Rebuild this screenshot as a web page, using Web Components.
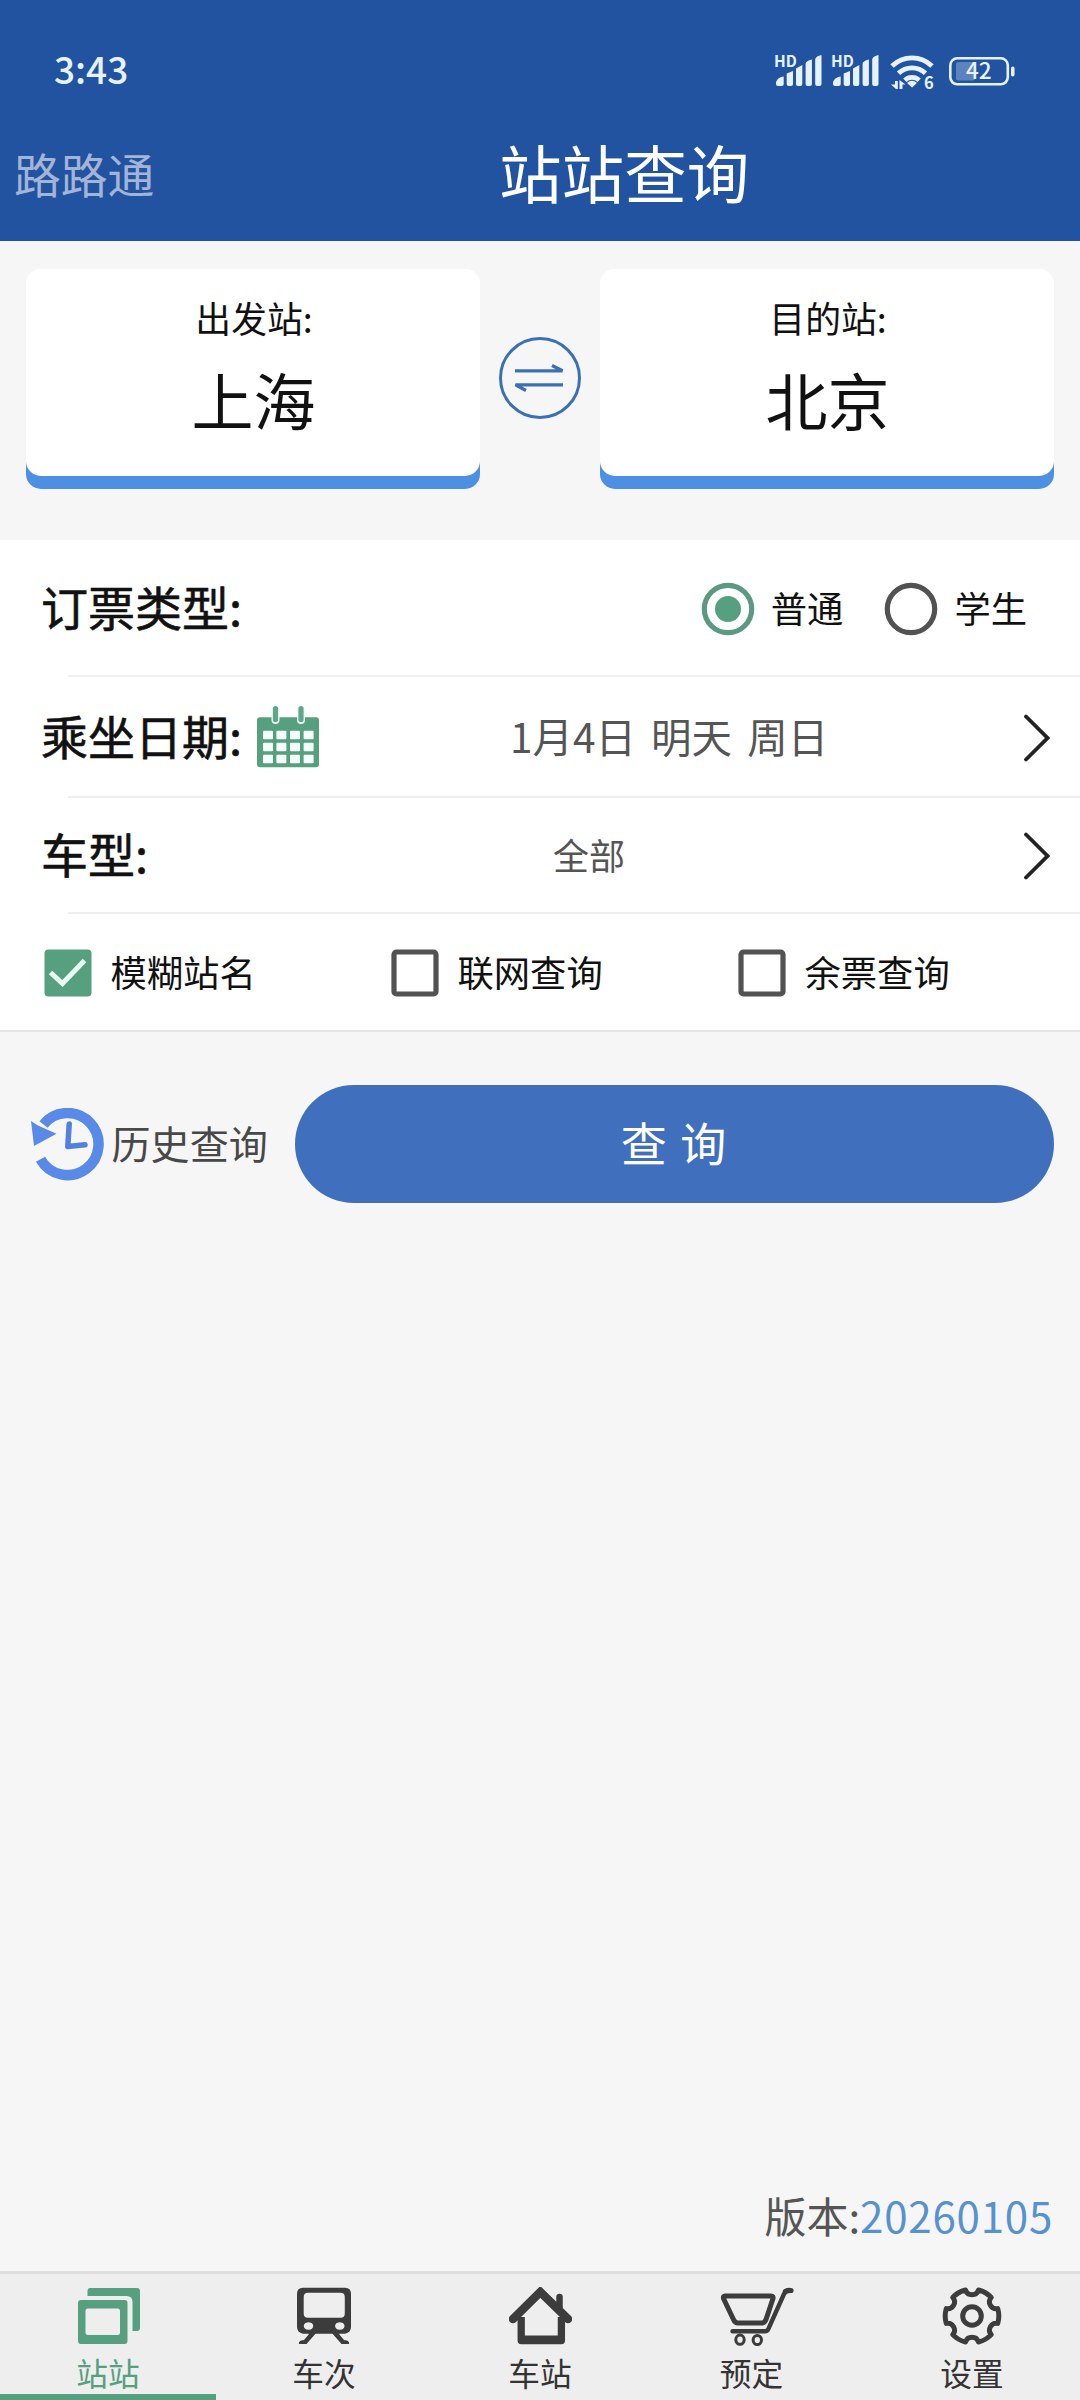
<!DOCTYPE html>
<html lang="zh-CN">
<head>
<meta charset="utf-8">
<title>站站查询</title>
<style>
html,body{margin:0;padding:0}
body{width:1080px;height:2400px;background:#f6f6f6;font-family:"Noto Sans CJK SC",sans-serif;color:#111}
</style>
</head>
<body>
<ticket-app></ticket-app>
<script>
const define = (name, html) => customElements.define(name, class extends HTMLElement {
  constructor() {
    super();
    this.attachShadow({ mode: 'open' });
  }
  connectedCallback() {
    const t = document.createElement('template');
    t.innerHTML = typeof html === 'function' ? html(this) : html;
    this.shadowRoot.replaceChildren(t.content.cloneNode(true));
  }
});

/* Six-lobed gear outline with round notches */
const gear = (() => {
  const p = (r, a) => (r * Math.cos(a * Math.PI / 180) + 31).toFixed(2) + ' ' + (r * Math.sin(a * Math.PI / 180) + 29).toFixed(2);
  let d = 'M' + p(26.8, -16);
  for (let k = 0; k < 6; k++) {
    d += 'A26.8 26.8 0 0 1 ' + p(26.8, k * 60 + 16) + 'A6.8 6.8 0 0 0 ' + p(26.8, k * 60 + 44);
  }
  return d + 'Z';
})();

const icons = {
  cards: `<svg width="62" height="58" fill="#56a07f" style="margin-left:1.500px"><path d="M9.500 9V4q0-3 3-3h46.500q3 0 3 3v37q0 3-3 3h-4.500V15q0-6-6-6z"/><path fill-rule="evenodd" d="M3 13h43.500q3 0 3 3v38q0 3-3 3H3q-3 0-3-3V16q0-3 3-3zM10 21.500q-2.500 0-2.500 2.500v21.500q0 2.500 2.500 2.500h29.500q2.500 0 2.500-2.500V24q0-2.500-2.500-2.500z"/></svg>`,
  train: `<svg width="54" height="58" fill="#3c3c3c"><path fill-rule="evenodd" d="M6 .7h42q6 0 6 6V40q0 5.500-6 6.700H6Q0 45.500 0 40V6.700q0-6 6-6zM11 5.700q-4.300 0-4.300 4.300v16.500q0 4.300 4.300 4.300h32.500q4.300 0 4.300-4.300V10q0-4.300-4.300-4.300zM11.500 35.200a4.700 3.800 0 1 0 .01 0zM42.800 35.200a4.700 3.800 0 1 0 .01 0z"/><path d="M10.500 45h9.500L9.500 57H2q-.8-2 2-3.500l3-.5 5-6zM43.500 45H34l10.500 12H52q.8-2-2-3.500l-3-.5-5-6z"/></svg>`,
  house: `<svg width="63" height="59" fill="none" stroke="#3c3c3c"><path d="M4 32 31.300 5 59 32" stroke-width="8.500" stroke-linecap="round"/><path d="M50.500 22V10" stroke-width="6.500" stroke-linecap="round"/><path d="M12.200 30v23.500h40.200V30" stroke-width="7.300" stroke-linejoin="round"/><path d="M12 52.500h41" stroke-width="8"/></svg>`,
  cart: `<svg width="76" height="59" fill="none" stroke="#3c3c3c" stroke-linejoin="round" stroke-linecap="round" style="margin-left:2px"><path d="M6 9h46q2.500 0 2 2.500l-7 21q-1.500 3.500-4 3.500H19q-3 0-4.500-3.500l-10-21Q4 9 6 9z" stroke-width="5"/><path d="M13.500 44.200H46q2.500 0 3.500-2.500L65 7q1.800-4 5.500-4" stroke-width="4.400"/><path d="M66.500 4.500q1.500-1 5.500-1" stroke-width="5.200"/><ellipse cx="21" cy="52.700" rx="4.200" ry="4.600" stroke-width="3"/><ellipse cx="38.300" cy="53" rx="4.200" ry="4.600" stroke-width="3"/></svg>`,
  gear: `<svg width="62" height="58" fill="none" stroke="#3c3c3c" stroke-linejoin="round"><path d="${gear}" stroke-width="5"/><circle cx="31" cy="29" r="9.300" stroke-width="5"/></svg>`
};

const bars = x => `<g transform="translate(${x} 0)"><text x="-2" y="15.500" font-size="15.500" font-weight="700">HD</text><path d="M0 33v-2q2-5 7.700-5.500V33q0 2-2 2H2q-2 0-2-2z"/><path d="M10.700 22.500l6.300-2.500v13q0 2-2 2h-2.300q-2 0-2-2z"/><path d="M20 17.500l6.300-3.500v19q0 2-2 2H22q-2 0-2-2z"/><path d="M29.600 13q0-3 6.300-4.500V33q0 2-2 2h-2.300q-2 0-2-2z"/><path d="M39.200 8q1-3 6.300-4V33q0 2-2 2h-2.300q-2 0-2-2z"/></g>`;

define('status-bar', `<style>
:host{display:flex;height:140px;justify-content:space-between;box-sizing:border-box;padding:39px 64px 0 54px;color:#e6f3ff}
time{font-size:37px;line-height:48px;font-weight:500;height:48px;margin-top:5px}
svg{font-family:"Noto Sans CJK SC",sans-serif;display:block}
</style><time>3:43</time>
<svg width="243" height="60" viewBox="0 -12 243 60" fill="#e6f3ff">
${bars(3)}${bars(60)}
<g fill="none" stroke="#e6f3ff" stroke-width="4.800"><path d="M119 15a28.500 28.500 0 0 1 40 0"/><path d="M125.500 22.300a19.500 19.500 0 0 1 27 0"/><path d="M131.800 29.200a10.800 10.800 0 0 1 14.400 0"/></g>
<path d="M134 32q5-4.500 10 0L139 36.500z"/>
<path d="M124.800 30v8h-1.800l-5-4.500h4V30zM126.500 38v-9l6 4.500h-3V38z"/>
<text x="151" y="38" font-size="16.500" font-weight="700">6</text>
<rect x="177.300" y="7.300" width="57.500" height="26" rx="7" fill="none" stroke="#e6f3ff" stroke-width="2.600"/>
<rect x="183" y="11" width="19" height="18.500" rx="2" opacity=".3"/>
<rect x="238" y="15.500" width="3.500" height="10" rx="1.700"/>
<text x="193" y="28.300" font-size="22.500" font-weight="500">42</text>
</svg>`);

define('title-bar', `<style>
:host{display:flex;align-items:center;height:101px;box-sizing:border-box;padding-left:14px;color:#fff}
.app{font-size:46.800px;line-height:60px;color:#a3b5d6;width:485px;position:relative;top:-18px}
h1{margin:0;font-size:62.600px;line-height:80px;font-weight:400;position:relative;top:-20px}
</style><div class="app"><slot name="app"></slot></div><h1><slot></slot></h1>`);

define('station-card', el => `<style>
:host{display:block;width:454px;height:220px;border-radius:15px;background:linear-gradient(#fff 0 60%,#4d90e3 60%)}
.face{height:207px;border-radius:15px;background:#fff;text-align:center}
.label{font-size:35.800px;line-height:50px;padding:23px 0 0 2px}
.name{font-size:62px;line-height:80px;padding:17px 0 0 1px}
</style><div class="face"><div class="label">${el.getAttribute('label')}</div><div class="name"><slot></slot></div></div>`);

define('swap-button', `<style>:host{display:block;width:84px;height:84px}svg{display:block}</style>
<svg width="84" height="84" fill="none" stroke="#3b70b2"><circle cx="42" cy="42" r="39.500" stroke-width="3"/><path d="M17 34.800h47.500L54 29.500M65 48.800H17.500L28 54.500" stroke-width="3.200"/></svg>`);

define('station-picker', `<style>
:host{display:flex;justify-content:space-between;height:299px;box-sizing:border-box;padding:28px 26px 0}
swap-button{margin-top:67px}
</style><station-card label="出发站:">上海</station-card><swap-button></swap-button><station-card label="目的站:">北京</station-card>`);

define('form-row', `<style>
:host{display:block;background:#fff;height:var(--h)}
.row{display:flex;align-items:center;height:calc(var(--h) - 2px);box-sizing:border-box;padding-top:2px}
.label{font-size:47px;line-height:60px;padding-left:41px;-webkit-text-stroke:.6px #111;margin-top:-6px}
.line{height:2px;margin-left:68px;background:#eee}
:host([last]) .line{margin-left:0;background:#e6e6e6}
::slotted(.value){color:#555}
</style><div class="row"><div class="label"><slot name="label"></slot></div><slot></slot></div><div class="line"></div>`);

define('radio-option', el => `<style>
:host{display:flex;align-items:center;gap:16px;font-size:36.300px;line-height:50px}
svg{display:block}
span{position:relative;top:-2px}
</style><svg width="54" height="54"><circle cx="27" cy="27" r="23.700" fill="none" stroke="${el.hasAttribute('checked') ? '#5b9a80' : '#525252'}" stroke-width="5.200"/>${el.hasAttribute('checked') ? '<circle cx="27" cy="27" r="13" fill="#56a07f"/>' : ''}</svg><span><slot></slot></span>`);

define('check-option', el => `<style>
:host{display:flex;align-items:center;gap:18.500px;font-size:36.300px;line-height:50px;width:347px}
svg{display:block}
span{position:relative;top:-2px}
</style><svg width="48" height="48">${el.hasAttribute('checked')
  ? '<rect x=".5" y=".5" width="47" height="47" rx="4" fill="#56a07f"/><path d="M6.500 23.500 18.500 34.500 40.500 11.500" fill="none" stroke="#e8fbf2" stroke-width="5"/>'
  : '<rect x="3" y="3" width="42" height="42" rx="2.500" fill="none" stroke="#525252" stroke-width="5.200"/>'}</svg><span><slot></slot></span>`);

define('calendar-icon', () => {
  let cells = '';
  for (const y of [24.7, 36.7, 48.7]) for (const x of [6, 19.4, 33, 46.6]) cells += `<rect x="${x}" y="${y}" width="10" height="8.500" rx="1" fill="#f4fffa"/>`;
  const peg = x => `<rect x="${x - 4}" y="1" width="8" height="17" rx="4" fill="#e6fff5"/><rect x="${x - 2.600}" y="0" width="5.200" height="16" rx="2.600" fill="#62a489"/>`;
  return `<style>:host{display:block;margin:-2px 0 0 15px}svg{display:block}</style><svg width="62" height="62"><rect y="11.300" width="62" height="50" rx="3" fill="#56a07f"/>${cells}${peg(18.5)}${peg(44)}</svg>`;
});

define('chevron-icon', `<style>:host{display:block;margin-left:auto;padding-right:30px}svg{display:block}</style><svg width="27" height="50" fill="none" stroke="#222" stroke-width="3.800" stroke-linecap="round" stroke-linejoin="miter"><path d="M3 3.500 24.500 25 3 46.500"/></svg>`);

define('history-link', `<style>
:host{display:flex;align-items:center;gap:5.500px;font-size:39.100px;line-height:52px;color:#484848}
svg{display:block;margin-top:2px}span{position:relative;top:-2px}
</style><svg width="75" height="74"><path d="M12.500 16.500A31 31 0 1 1 9.500 51.200" fill="none" stroke="#5a8ae8" stroke-width="10.500"/><path d="M0 13 7 17.500 25.500 25.800 3 38z" fill="#5a8ae8"/><path d="M38.200 16 36.800 38.500 54 36.800" fill="none" stroke="#5280df" stroke-width="5.500" stroke-linecap="round" stroke-linejoin="round"/></svg><span><slot></slot></span>`);

define('query-button', `<style>
:host{display:flex;align-items:center;justify-content:center;width:759px;height:118px;border-radius:59px;background:#4070bd;color:#fff;font-size:46px;line-height:60px;word-spacing:3px}
span{position:relative;top:-3px;left:-1px}
</style><span><slot></slot></span>`);

define('tab-item', el => `<style>
:host{display:flex;flex-direction:column;align-items:center;width:216px;height:126px;box-sizing:border-box;padding-top:13px;color:#333}
:host([active]){color:#56a07f;border-bottom:6px solid #56a07f}
.icon{height:60px}
svg{display:block}
.text{font-size:31.700px;line-height:44px;margin-top:3px}
:host([icon=cart]) .text{margin-right:9px}
</style><div class="icon">${icons[el.getAttribute('icon')]}</div><div class="text"><slot></slot></div>`);

define('tab-bar', `<style>:host{display:flex;height:129px;box-sizing:border-box;border-top:3px solid #dedede;background:#eee}</style><slot></slot>`);

define('ticket-app', `<style>
:host{display:flex;flex-direction:column;height:2400px;background:#f6f6f6}
header{background:#2253a1}
.radios{display:flex;gap:41px;margin-left:auto;padding-right:53px}
.checks{display:flex;margin-left:3px}
.date{font-size:40.500px;line-height:56px;margin-left:191px;word-spacing:6px;margin-top:-3px}
.type{font-size:36px;line-height:50px;margin-left:405px;margin-top:-4px}
.actions{display:flex;align-items:center;justify-content:space-between;padding:53px 26px 0 31px}
.version{margin-top:auto;align-self:flex-end;padding-right:27px;font-size:42px;line-height:60px;color:#555;margin-bottom:26px}
.version span{color:#5792cf;letter-spacing:.8px}
</style>
<header><status-bar></status-bar><title-bar><span slot="app">路路通</span>站站查询</title-bar></header>
<station-picker></station-picker>
<form-row style="--h:137px"><span slot="label">订票类型:</span><div class="radios"><radio-option checked>普通</radio-option><radio-option>学生</radio-option></div></form-row>
<form-row style="--h:121px"><span slot="label">乘坐日期:</span><calendar-icon></calendar-icon><div class="value date">1月4日 明天 周日</div><chevron-icon></chevron-icon></form-row>
<form-row style="--h:116px"><span slot="label">车型:</span><div class="value type">全部</div><chevron-icon></chevron-icon></form-row>
<form-row last style="--h:118px"><div class="checks"><check-option checked>模糊站名</check-option><check-option>联网查询</check-option><check-option>余票查询</check-option></div></form-row>
<div class="actions"><history-link>历史查询</history-link><query-button>查 询</query-button></div>
<div class="version">版本:<span>20260105</span></div>
<tab-bar><tab-item icon="cards" active>站站</tab-item><tab-item icon="train">车次</tab-item><tab-item icon="house">车站</tab-item><tab-item icon="cart">预定</tab-item><tab-item icon="gear">设置</tab-item></tab-bar>`);
</script>
</body>
</html>
